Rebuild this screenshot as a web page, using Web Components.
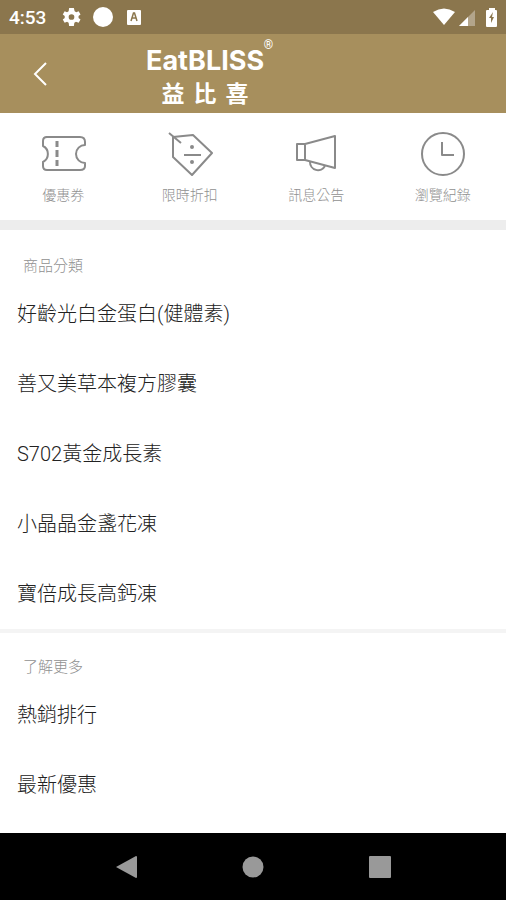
<!DOCTYPE html>
<html lang="zh-Hant">
<head>
<meta charset="utf-8">
<meta name="viewport" content="width=device-width, initial-scale=1">
<title>EatBLISS 益比喜</title>
<style>
    html, body {
        margin: 0;
        min-height: 100%;
    }
    body {
        background: #fff;
        color: #222;
        font-family: Roboto, "Noto Sans CJK TC", sans-serif;
        font-weight: 300;
    }
</style>
</head>
<body>
<app-shell>
    <status-bar slot="top" time="4:53"></status-bar>
    <brand-header slot="top">
        EatBLISS
        <span slot="local">益</span>
        <span slot="local">比</span>
        <span slot="local">喜</span>
    </brand-header>

    <quick-menu>
        <quick-link icon="coupon" href="#coupons">優惠券</quick-link>
        <quick-link icon="discount" href="#discounts">限時折扣</quick-link>
        <quick-link icon="news" href="#news">訊息公告</quick-link>
        <quick-link icon="history" href="#history">瀏覽紀錄</quick-link>
    </quick-menu>

    <menu-section heading="商品分類">
        <menu-item href="#protein">好齡光白金蛋白(健體素)</menu-item>
        <menu-item href="#capsule">善又美草本複方膠囊</menu-item>
        <menu-item href="#s702">S702黃金成長素</menu-item>
        <menu-item href="#marigold">小晶晶金盞花凍</menu-item>
        <menu-item href="#calcium">寶倍成長高鈣凍</menu-item>
    </menu-section>

    <menu-section heading="了解更多" divided>
        <menu-item href="#ranking">熱銷排行</menu-item>
        <menu-item href="#offers">最新優惠</menu-item>
    </menu-section>

    <system-nav slot="bottom"></system-nav>
</app-shell>

<script>
    const ICONS = {
        coupon: `
            <path d="M6 5H40Q45 5 45 10V13A9 9 0 0 0 45 31V34Q45 38 40 38H7Q3 38 3 34V30A9 9 0 0 0 3 14V9Q3 5 7 5Z"/>
            <path d="M17 9V15M17 18V25M17 28V34" stroke-width="3"/>`,
        discount: `
            <path d="M6 5L26 3L45 21L25 43L6 25Z"/>
            <path d="M2 1L14 11M17 23H34"/>
            <circle cx="25" cy="15" r="1"/>
            <circle cx="25" cy="30" r="1"/>`,
        news: `
            <path d="M4 12H12V28H4ZM12 12L42 4V36L12 28"/>
            <path d="M17 30A8 8 0 0 0 32 34"/>`,
        history: `
            <circle cx="23" cy="22" r="21"/>
            <path d="M22 10V23H34"/>`
    };

    function define(name, render) {
        customElements.define(name, class extends HTMLElement {
            connectedCallback() {
                if (!this.shadowRoot) {
                    this.attachShadow({ mode: "open" }).innerHTML = render(this);
                }
            }
        });
    }

    define("app-shell", () => `
        <style>
            :host {
                display: flex;
                flex-direction: column;
                min-height: 100vh;
            }
            main { flex: 1; }
        </style>
        <slot name="top"></slot>
        <main><slot></slot></main>
        <slot name="bottom"></slot>
    `);

    define("status-bar", el => `
        <style>
            :host {
                display: flex;
                align-items: center;
                justify-content: space-between;
                height: 34px;
                padding: 0 8px 0 9px;
                background: #8b764d;
                color: #fff;
                font-size: 19px;
                font-weight: 500;
            }
            div { display: flex; align-items: center; }
            svg { display: block; fill: currentColor; }
            .left { gap: 12px; }
            .left time { margin-right: 4px; }
            .right { gap: 4px; }
            .right svg:last-child { margin-left: 6px; }
        </style>
        <div class="left">
            <time>${el.getAttribute("time")}</time>
            <svg width="19" height="20" viewBox="3 2 20 20"><path fill-rule="evenodd" d="M20.400 13c.1-.7.1-1.300 0-2l2.100-1.600-2-3.500-2.500 1a8 8 0 0 0-1.700-1L15.500 2.500h-5l-.5 3.400a8 8 0 0 0-1.700 1l-2.500-1-2 3.500L5.900 11c-.1.7-.1 1.300 0 2l-2.100 1.600 2 3.500 2.500-1a8 8 0 0 0 1.700 1l.5 3.400h5l.5-3.400a8 8 0 0 0 1.700-1l2.800 1 2-3.500zM13 9a3 3 0 1 1 0 6 3 3 0 0 1 0-6Z"/></svg>
            <svg width="20" height="20" viewBox="0 0 20 20"><circle cx="10" cy="10" r="10"/></svg>
            <svg width="16" height="16" viewBox="0 0 16 16"><rect x="2" y="1" width="14" height="15" rx="1"/><path d="M6 12L8.500 4H9.500L12 12M7 9H11" fill="none" stroke="#8b764d" stroke-width="1.500"/></svg>
        </div>
        <div class="right">
            <svg width="22" height="18" viewBox="0 0 22 18"><path d="M0 4Q11-3 22 4L11 17Z"/></svg>
            <svg width="17" height="17" viewBox="0 0 17 17"><path d="M0 17L16 1V17Z" opacity=".35"/><path d="M0 17L9 8V17Z"/></svg>
            <svg width="12" height="20" viewBox="0 0 12 20"><path d="M3 1H9V3H10Q11 3 11 4V19Q11 20 10 20H1Q0 20 0 19V4Q0 3 1 3H3Z"/><path d="M7 5L3 11H5L5 16L8 10H6Z" fill="#8b764d"/></svg>
        </div>
    `);

    define("brand-header", () => `
        <style>
            :host {
                display: flex;
                align-items: center;
                height: 79px;
                background: #a78f5d;
                color: #fff;
            }
            button {
                width: 80px;
                height: 79px;
                padding: 0;
                border: 0;
                background: none;
                color: inherit;
            }
            button svg { display: block; margin: 0 auto; }
            h1 {
                position: relative;
                margin: 0 0 0 66px;
                padding-top: 4px;
                text-align: center;
                font: 700 27px/32px Inter, sans-serif;
            }
            sup {
                position: absolute;
                top: -2px;
                right: -9px;
                font: 400 12px/12px Roboto, sans-serif;
            }
            .local {
                display: flex;
                justify-content: center;
                gap: 9px;
                font: 700 23px/30px "Noto Sans CJK TC", sans-serif;
            }
        </style>
        <button type="button" aria-label="返回">
            <svg width="14" height="24" viewBox="0 0 14 24" fill="none" stroke="currentColor" stroke-width="2"><path d="M13 1L2 12L13 23"/></svg>
        </button>
        <h1>
            <slot></slot><sup>®</sup>
            <div class="local"><slot name="local"></slot></div>
        </h1>
    `);

    define("quick-menu", () => `
        <style>
            :host {
                display: grid;
                grid-template-columns: repeat(4, 1fr);
                padding: 19px 0 13px;
                border-bottom: 10px solid #ededed;
            }
        </style>
        <slot></slot>
    `);

    define("quick-link", el => `
        <style>
            :host { display: block; }
            a {
                display: flex;
                flex-direction: column;
                align-items: center;
                gap: 7px;
                color: #909090;
                font-size: 14px;
                line-height: 24px;
                text-decoration: none;
            }
            svg {
                fill: none;
                stroke: #8a8a8a;
                stroke-width: 2;
                stroke-linejoin: round;
            }
        </style>
        <a href="${el.getAttribute("href")}">
            <svg width="46" height="44" viewBox="0 0 46 44">${ICONS[el.getAttribute("icon")]}</svg>
            <slot></slot>
        </a>
    `);

    define("menu-section", el => `
        <style>
            :host { display: block; }
            :host([divided]) { border-top: 4px solid #f4f4f4; }
            h2 {
                margin: 0;
                padding: 26px 23px 3px;
                color: #909090;
                font-size: 15px;
                font-weight: 300;
                line-height: 20px;
            }
            :host([divided]) h2 { padding-top: 24px; }
        </style>
        <h2>${el.getAttribute("heading")}</h2>
        <slot></slot>
    `);

    define("menu-item", el => `
        <style>
            :host { display: block; }
            a {
                display: block;
                padding: 20px 17px;
                color: inherit;
                font-size: 20px;
                line-height: 30px;
                text-decoration: none;
            }
        </style>
        <a href="${el.getAttribute("href")}"><slot></slot></a>
    `);

    define("system-nav", () => `
        <style>
            :host {
                display: grid;
                grid-template-columns: repeat(3, 1fr);
                height: 67px;
                padding: 0 12.5%;
                background: #000;
            }
            button {
                padding: 0;
                border: 0;
                background: none;
            }
            svg { display: block; margin: 0 auto; fill: #999; }
        </style>
        <button type="button" aria-label="Back"><svg width="22" height="24" viewBox="0 0 22 24"><path d="M0 12L20 1Q21 1 21 2V22Q21 23 20 23Z"/></svg></button>
        <button type="button" aria-label="Home"><svg width="22" height="22" viewBox="0 0 22 22"><circle cx="11" cy="11" r="10.500"/></svg></button>
        <button type="button" aria-label="Recent apps"><svg width="22" height="22" viewBox="0 0 22 22"><rect width="22" height="22" rx="1"/></svg></button>
    `);
</script>
</body>
</html>
